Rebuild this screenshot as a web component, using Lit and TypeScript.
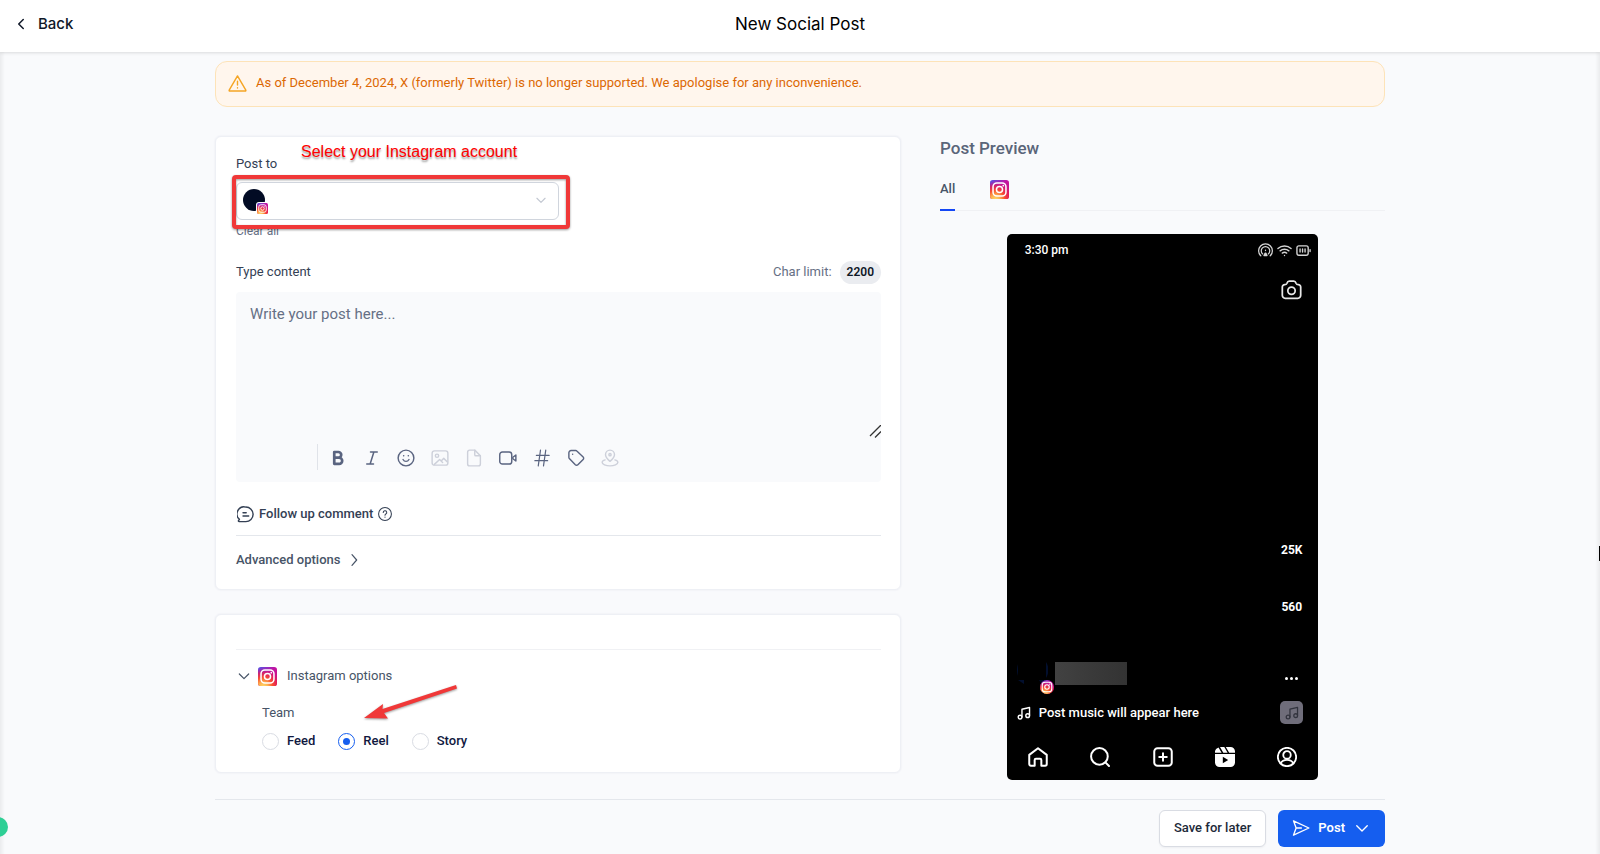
import { LitElement, html, css, svg } from "lit";
import { customElement, state } from "lit/decorators.js";

const stroke = (body: unknown, size = 20, width = 1.6, box = 24) => html`
  <svg
    width=${size}
    height=${size}
    viewBox="0 0 ${box} ${box}"
    fill="none"
    stroke="currentColor"
    stroke-width=${width}
    stroke-linecap="round"
    stroke-linejoin="round"
    aria-hidden="true"
  >
    ${body}
  </svg>
`;

const instagramMark = (size: number) => html`
  <svg width=${size} height=${size} viewBox="0 0 20 20" aria-hidden="true">
    <defs>
      <linearGradient id="ig-base" x1="0.1" y1="0" x2="0.9" y2="0.9">
        <stop offset="0" stop-color="#5b4fe0" />
        <stop offset="0.45" stop-color="#c013a4" />
        <stop offset="1" stop-color="#d6156c" />
      </linearGradient>
      <radialGradient id="ig-glow" cx="0.28" cy="1.05" r="1">
        <stop offset="0" stop-color="#ffdd6b" />
        <stop offset="0.25" stop-color="#fdb04f" />
        <stop offset="0.5" stop-color="#f9502f" />
        <stop offset="0.75" stop-color="#e8204f" stop-opacity="0.7" />
        <stop offset="1" stop-color="#c013a4" stop-opacity="0" />
      </radialGradient>
    </defs>
    <rect width="20" height="20" rx="3" fill="url(#ig-base)" />
    <rect width="20" height="20" rx="3" fill="url(#ig-glow)" />
    <rect x="3.2" y="3.2" width="13.6" height="13.6" rx="4" fill="none" stroke="#fff" stroke-width="1.6" />
    <circle cx="10" cy="10" r="3.2" fill="none" stroke="#fff" stroke-width="1.6" />
    <circle cx="14" cy="6" r="0.9" fill="#fff" />
  </svg>
`;

const icons = {
  back: svg`<path d="M15 6l-6 6 6 6" />`,
  down: svg`<path d="M5 9l7 7 7-7" />`,
  right: svg`<path d="M9 4l7 8-7 8" />`,
  warning: svg`<path d="M12 2.500L22.500 20.500a.6.6 0 0 1-.6.9H2.100a.6.6 0 0 1-.6-.9z" /><path d="M12 9v5M12 17.400v.2" />`,
  bold: svg`<path d="M7 4h5.500a3.800 3.800 0 0 1 0 7.600H7zM7 11.600h6.500a4.100 4.100 0 0 1 0 8.200H7z" />`,
  italic: svg`<path d="M10 4h9M5 20h9M14.500 4l-5 16" />`,
  smile: svg`<circle cx="12" cy="12" r="10.500" /><path d="M8 14s1.500 2.500 4 2.500 4-2.500 4-2.500M8.800 9h.2M15 9h.2" />`,
  image: svg`<rect x="1.500" y="2.500" width="21" height="19" rx="3" /><circle cx="8" cy="9" r="2.200" /><path d="M4.500 20.500L11.500 14l4 4M13.500 16l3.500-3.500 4.500 4.500" />`,
  file: svg`<path d="M13 1.500H6A2.500 2.500 0 0 0 3.500 4v16A2.500 2.500 0 0 0 6 22.500h12a2.500 2.500 0 0 0 2.500-2.500V9z" /><path d="M13 1.500v6A1.500 1.500 0 0 0 14.500 9h6" />`,
  video: svg`<rect x="1" y="4" width="16" height="16" rx="3.500" /><path d="M18.500 11l4-3v8l-4-3z" />`,
  hash: svg`<path d="M4.500 8.500h17M2.500 15.500h17M10 1.500L7 22.500M17 1.500l-3 21" />`,
  tag: svg`<path d="M2.500 5v6.200a2 2 0 0 0 .6 1.400l8 8.400a2.400 2.400 0 0 0 3.400 0l7-7a2.400 2.400 0 0 0 0-3.400l-8.400-8A2 2 0 0 0 11.700 2H5.500a3 3 0 0 0-3 3z" /><path d="M7.500 7h.01" />`,
  place: svg`<path d="M12 16.500c3.500-3.300 6-5.800 6-9a6 6 0 0 0-12 0c0 3.200 2.500 5.700 6 9z" /><circle cx="12" cy="7.500" r="1.500" /><path d="M5.500 14.500C3 15.300 1.500 16.400 1.500 17.700c0 2.500 5 4.800 10.500 4.800s10.500-2.300 10.500-4.800c0-1.300-1.500-2.400-4-3.200" />`,
  comment: svg`<path d="M12.500 1.500a10 10 0 1 1 0 20.500H3c-1 0-1.300-.8-.8-1.500l1.200-1.800A10 10 0 0 1 12.500 1.500z" /><path d="M8.500 9.500h4.500M8.500 14h8" />`,
  help: svg`<circle cx="12" cy="12" r="11" /><path d="M9 9.500a3 3 0 1 1 4.500 2.500c-1 .6-1.500 1.100-1.500 2M12 17.300v.1" />`,
  send: svg`<path d="M5.500 12L2 2.500l20.500 9.500L2 21.500z M5.500 12h7" />`,
  cast: svg`<path d="M4.500 20.500a11 11 0 1 1 15 0M7.500 17.500a6.800 6.800 0 1 1 9 0" /><path fill="currentColor" d="M12 11.500v.5M9.500 20l2-4h1l2 4z" />`,
  wifi: svg`<path d="M1.500 8.800a15.500 15.500 0 0 1 21 0M5 12.600a10.500 10.500 0 0 1 14 0M8.500 16.200a5.500 5.500 0 0 1 7 0M12 19.800v.1" />`,
  battery: svg`<rect x="1.500" y="4.500" width="18" height="15" rx="3" /><path d="M22.500 10.500v3M6.500 9.500v5M10.500 9.500v5M14.500 9.500v5" />`,
  camera: svg`<path d="M1.500 9.200A2.700 2.700 0 0 1 4.200 6.500c1.400 0 2.200-.6 2.600-1.700.4-1.200 1.300-2.300 2.700-2.300h5c1.400 0 2.300 1.100 2.700 2.300.4 1.100 1.200 1.700 2.600 1.700a2.700 2.700 0 0 1 2.700 2.700v9.500a3.300 3.300 0 0 1-3.300 3.300H4.800a3.300 3.300 0 0 1-3.300-3.300z" /><circle cx="12" cy="13.500" r="4.200" />`,
  music: svg`<path d="M8.500 19V5.500l13-3V16" /><circle cx="5.300" cy="19" r="3.200" /><circle cx="18.300" cy="16.500" r="3.200" />`,
  home: svg`<path d="M1.500 9.500L12 1.500l10.500 8v11a2 2 0 0 1-2 2H16v-7a1.500 1.500 0 0 0-1.500-1.500h-5A1.500 1.500 0 0 0 8 15.500v7H3.500a2 2 0 0 1-2-2z" />`,
  search: svg`<circle cx="11.300" cy="11.300" r="10" /><path d="M18.500 18.500l4.300 4.300" />`,
  plus: svg`<rect x="1.500" y="1.500" width="21" height="21" rx="4" /><path d="M12 7.500v9M7.500 12h9" />`,
  profile: svg`<circle cx="12" cy="12" r="11" /><circle cx="12" cy="9.500" r="4.500" /><path d="M4.500 19.500c1.500-3 4-4 7.500-4s6 1 7.500 4" />`,
};

const reelsIcon = html`
  <svg width="20" height="20" viewBox="0 0 20 20" aria-hidden="true">
    <path fill="#fff" d="M0 7h20v8.500a4.500 4.500 0 0 1-4.500 4.500h-11A4.500 4.500 0 0 1 0 15.500z" />
    <path fill="#fff" d="M0 5.800A5 5 0 0 1 3.500.4L6.600 5.800zM5 0h4.300l3.300 5.800H8.300zM10.800 0h4.700A4.500 4.500 0 0 1 20 4.500v1.300h-5.800z" />
    <path fill="#000" d="M7.800 9.800l5.400 3.200-5.400 3.200z" />
  </svg>
`;

const tools = [
  { name: "Bold", icon: icons.bold, width: 3.6, disabled: false },
  { name: "Italic", icon: icons.italic, width: 2, disabled: false },
  { name: "Emoji", icon: icons.smile, width: 1.9, disabled: false },
  { name: "Image", icon: icons.image, width: 1.9, disabled: true },
  { name: "File", icon: icons.file, width: 1.9, disabled: true },
  { name: "Video", icon: icons.video, width: 1.9, disabled: false },
  { name: "Hashtag", icon: icons.hash, width: 1.6, disabled: false },
  { name: "Tag", icon: icons.tag, width: 1.9, disabled: false },
  { name: "Location", icon: icons.place, width: 1.9, disabled: true },
];

@customElement("post-composer")
export class PostComposer extends LitElement {
  static styles = css`
    :host {
      display: block;
    }
    * {
      box-sizing: border-box;
    }
    svg {
      display: block;
      flex: none;
    }
    button,
    textarea {
      font: inherit;
      color: inherit;
      background: none;
      border: 0;
      padding: 0;
    }
    .card {
      border: 1px solid #eef0f5;
      border-radius: 6px;
      background: #fff;
      box-shadow: 0 0 1px 1px #f3f4f8;
      padding: 17px 19px 19px 20px;
      position: relative;
    }
    .label {
      display: block;
      line-height: 20px;
      color: #344054;
    }
    .account {
      display: flex;
      align-items: center;
      justify-content: space-between;
      width: 50%;
      height: 38px;
      margin-top: 8px;
      padding: 0 10px 2px 6px;
      border: 1px solid #d0d5dd;
      border-radius: 6px;
      background: #fff;
      color: #c3c8d2;
    }
    .avatar {
      position: relative;
      width: 22px;
      height: 22px;
      border-radius: 50%;
      background: #020b24;
    }
    .avatar-badge {
      position: absolute;
      left: 13px;
      top: 13px;
      padding: 1px;
      border-radius: 3px;
      background: #fff;
    }
    .clear {
      display: block;
      margin-top: 1px;
      font-size: 12px;
      line-height: 20px;
      color: #667085;
    }
    .content-head {
      display: flex;
      align-items: center;
      justify-content: space-between;
      height: 24px;
      margin: 19px 0 8px;
    }
    .limit {
      display: flex;
      align-items: center;
      gap: 8px;
      color: #667085;
    }
    .pill {
      padding: 0 7px;
      border-radius: 12px;
      background: #eaecf0;
      color: #101828;
      font-size: 12px;
      font-weight: 600;
      line-height: 23px;
    }
    .editor {
      position: relative;
      border-radius: 4px;
      background: #f9fafc;
    }
    .text {
      display: block;
      width: 100%;
      height: 146px;
      padding: 10px 14px;
      outline: 0;
      resize: none;
      font-size: 15px;
      line-height: 24px;
    }
    .text::placeholder {
      color: #667085;
    }
    .grip {
      position: absolute;
      right: 0;
      top: 133px;
      color: #333;
    }
    .tools {
      display: flex;
      align-items: center;
      gap: 16px;
      height: 44px;
      margin-left: 81px;
      padding: 0 0 4px 12px;
      color: #5a6480;
      position: relative;
    }
    .tools::before {
      content: "";
      position: absolute;
      left: 0;
      top: 6px;
      height: 26px;
      border-left: 1px solid #e0e3e9;
    }
    .tool:disabled {
      color: #cdd0da;
    }
    .follow {
      display: flex;
      align-items: center;
      gap: 5px;
      margin-top: 22px;
      padding: 0 0 11px 1px;
      line-height: 20px;
      font-weight: 500;
      color: #344054;
      border-bottom: 1px solid #e4e7ec;
      width: 100%;
    }
    .advanced {
      display: flex;
      align-items: center;
      gap: 6px;
      margin-top: 14px;
      line-height: 20px;
      font-weight: 500;
      color: #475467;
    }
    .options {
      margin-top: 24px;
      padding: 34px 19px 21px 20px;
    }
    .options-head {
      display: flex;
      align-items: center;
      width: 100%;
      padding-top: 16px;
      line-height: 20px;
      color: #475467;
      border-top: 1px solid #f0f1f4;
    }
    .options-head .name {
      margin-left: 10px;
    }
    .options-head .mark {
      margin-left: 6px;
    }
    .group {
      border: 0;
      margin: 0;
      padding: 17px 0 0 26px;
    }
    .group legend {
      display: contents;
    }
    .team {
      display: block;
      line-height: 20px;
      color: #475467;
    }
    .radios {
      display: flex;
      gap: 23px;
      margin-top: 8px;
    }
    .radio {
      display: flex;
      align-items: center;
      gap: 8px;
      line-height: 20px;
      font-weight: 500;
      color: #101840;
    }
    .radio input {
      appearance: none;
      display: grid;
      place-items: center;
      width: 17px;
      height: 17px;
      margin: 0;
      border: 1px solid #d9dce3;
      border-radius: 50%;
      background: #fff;
    }
    .radio input:checked {
      border-color: #155eef;
    }
    .radio input:checked::before {
      content: "";
      width: 7px;
      height: 7px;
      border-radius: 50%;
      background: #155eef;
    }
    .frame {
      position: absolute;
      left: 16px;
      top: 38px;
      width: calc(50% - 4px);
      height: 54px;
      border: 4px solid #f03838;
      border-radius: 4px;
      filter: drop-shadow(0 1px 1px #0006);
      pointer-events: none;
    }
    .note {
      position: absolute;
      left: 85px;
      top: 5px;
      font: 16px/20px "Liberation Sans", Arial, sans-serif;
      color: #f00;
      white-space: nowrap;
      text-shadow: 0 2px 2px #0006;
    }
    .arrow {
      position: absolute;
      left: 148px;
      top: 69px;
      filter: drop-shadow(0 1px 1px #0006);
    }
  `;

  @state() private placement = "Reel";

  render() {
    return html`
      <section class="card">
        <span class="label" id="account-label">Post to</span>
        <button class="account" aria-labelledby="account-label" aria-haspopup="listbox">
          <span class="avatar"><span class="avatar-badge">${instagramMark(11)}</span></span>
          ${stroke(icons.down, 14, 2)}
        </button>
        <button class="clear">Clear all</button>
        <div class="content-head">
          <label class="label" for="content">Type content</label>
          <span class="limit">Char limit: <span class="pill">2200</span></span>
        </div>
        <div class="editor">
          <textarea class="text" id="content" placeholder="Write your post here..."></textarea>
          <svg class="grip" width="12" height="13" viewBox="0 0 12 13" stroke="currentColor" stroke-width="1.3" aria-hidden="true">
            <path d="M1 11L12 0M6 12.500L12 6.500" />
          </svg>
          <div class="tools">
            ${tools.map(
              (t) => html`<button class="tool" aria-label=${t.name} ?disabled=${t.disabled}>
                ${stroke(t.icon, 18, t.width)}
              </button>`,
            )}
          </div>
        </div>
        <button class="follow">
          ${stroke(icons.comment, 17, 2)}<span>Follow up comment</span>${stroke(icons.help, 14, 1.8)}
        </button>
        <button class="advanced"><span>Advanced options</span>${stroke(icons.right, 16, 1.8)}</button>
        <div class="frame"></div>
        <span class="note">Select your Instagram account</span>
      </section>

      <section class="card options">
        <button class="options-head" aria-expanded="true">
          ${stroke(icons.down, 16, 1.8)}<span class="mark">${instagramMark(19)}</span
          ><span class="name">Instagram options</span>
        </button>
        <fieldset class="group">
          <legend><span class="team">Team</span></legend>
          <div class="radios">
            ${["Feed", "Reel", "Story"].map(
              (name) => html`<label class="radio">
                <input
                  type="radio"
                  name="placement"
                  .checked=${this.placement === name}
                  @change=${() => (this.placement = name)}
                />${name}
              </label>`,
            )}
          </div>
        </fieldset>
        <svg class="arrow" width="94" height="36" viewBox="0 0 94 36" fill="#f03838" aria-hidden="true">
          <path d="M0 34L19 20L18.500 25L92 1L93 4.500L20 29L24 34.500z" />
        </svg>
      </section>
    `;
  }
}

@customElement("post-preview")
export class PostPreview extends LitElement {
  static styles = css`
    :host {
      display: block;
    }
    * {
      box-sizing: border-box;
    }
    svg {
      display: block;
      flex: none;
    }
    button {
      font: inherit;
      color: inherit;
      background: none;
      border: 0;
      padding: 0;
    }
    .title {
      margin: 0;
      font-size: 17px;
      font-weight: 500;
      line-height: 24px;
      color: #5a6579;
    }
    .tabs {
      display: flex;
      gap: 35px;
      height: 40px;
      margin-top: 11px;
      border-bottom: 1px solid #f0f1f4;
    }
    .tab {
      display: flex;
      align-items: center;
      height: 40px;
      padding-bottom: 3px;
      color: #475467;
    }
    .active {
      font-weight: 500;
      border-bottom: 2px solid #1447f5;
    }
    .phone {
      display: flex;
      flex-direction: column;
      width: 70%;
      height: 546px;
      margin: 23px auto 0;
      border-radius: 5px;
      background: #000;
      color: #fff;
    }
    .status {
      display: flex;
      align-items: center;
      justify-content: space-between;
      padding: 6px 7px 0 18px;
      font-size: 12px;
      font-weight: 500;
      line-height: 20px;
    }
    .status-icons {
      display: flex;
      gap: 4px;
      color: #d5d5d5;
    }
    .camera {
      align-self: flex-end;
      margin: 19px 16px 0 0;
      color: #e8e8e8;
    }
    .body {
      flex: 1;
      display: flex;
      justify-content: space-between;
      align-items: flex-end;
      padding: 0 15px 0 10px;
    }
    .author {
      display: flex;
      gap: 7px;
    }
    .face {
      position: relative;
      width: 31px;
      height: 23px;
    }
    .face-badge {
      position: absolute;
      left: 23px;
      top: 18px;
      border-radius: 50%;
      overflow: hidden;
    }
    .blurred {
      width: 72px;
      height: 23px;
      background: linear-gradient(90deg, #424242, #3a3a3a 50%, #333);
    }
    .music {
      display: flex;
      align-items: center;
      gap: 8px;
      margin: 18px 0 1px;
      font-weight: 500;
      line-height: 20px;
    }
    .rail {
      display: flex;
      flex-direction: column;
      align-items: center;
      font-size: 12px;
      font-weight: 700;
      line-height: 20px;
      width: 23px;
    }
    .stat {
      margin-bottom: 37px;
    }
    .more {
      margin: 23px 0 21px;
    }
    .cover {
      display: grid;
      place-items: center;
      width: 23px;
      height: 23px;
      border-radius: 5px;
      background: #6f6d7a;
      color: #32343e;
    }
    .nav {
      display: flex;
      justify-content: space-between;
      padding: 23px 21px 13px;
    }
  `;

  render() {
    return html`
      <h2 class="title">Post Preview</h2>
      <div class="tabs" role="tablist">
        <button class="tab active" role="tab" aria-selected="true">All</button>
        <button class="tab" role="tab" aria-label="Instagram">${instagramMark(19)}</button>
      </div>
      <div class="phone">
        <div class="status">
          <span>3:30 pm</span>
          <span class="status-icons">
            ${stroke(icons.cast, 15, 2)}${stroke(icons.wifi, 15, 2.2)}${stroke(icons.battery, 15, 2.2)}
          </span>
        </div>
        <span class="camera">${stroke(icons.camera, 21, 2)}</span>
        <div class="body">
          <div>
            <div class="author">
              <span class="face">
                <svg width="31" height="23" viewBox="0 0 31 23" fill="#020f2e" aria-hidden="true">
                  <path d="M1 2Q-1 8 1 14V2zM29 0Q34 8 29 16zM1 18h6v4zM22 18h7l-5 3z" />
                </svg>
                <span class="face-badge">${instagramMark(14)}</span>
              </span>
              <span class="blurred"></span>
            </div>
            <div class="music">${stroke(icons.music, 14, 2.4)}<span>Post music will appear here</span></div>
          </div>
          <div class="rail">
            <span class="stat">25K</span>
            <span class="stat">560</span>
            <svg class="more" width="13" height="3" viewBox="0 0 13 3" fill="#fff" aria-hidden="true">
              <circle cx="1.500" cy="1.500" r="1.500" /><circle cx="6.500" cy="1.500" r="1.500" /><circle cx="11.500" cy="1.500" r="1.500" />
            </svg>
            <span class="cover">${stroke(icons.music, 14, 2.2)}</span>
          </div>
        </div>
        <div class="nav">
          ${stroke(icons.home, 20, 2.4)}${stroke(icons.search, 20, 2.4)}${stroke(icons.plus, 20, 2.4)}
          ${reelsIcon}${stroke(icons.profile, 20, 2.2)}
        </div>
      </div>
    `;
  }
}

@customElement("app-root")
export class AppRoot extends LitElement {
  static styles = css`
    :host {
      display: flex;
      flex-direction: column;
      min-height: 100vh;
      position: relative;
      overflow: hidden;
      background: #f9fafc;
      font: 13px/20px Roboto, "Liberation Sans", sans-serif;
    }
    * {
      box-sizing: border-box;
    }
    svg {
      display: block;
      flex: none;
    }
    button {
      font: inherit;
      color: inherit;
      background: none;
      border: 0;
      padding: 0;
    }
    .header {
      display: grid;
      grid-template-columns: 1fr auto 1fr;
      align-items: center;
      height: 52px;
      padding: 0 12px 5px;
      background: #fff;
      box-shadow: 0 0 4px #0003;
      color: #101828;
      font: 500 16px/24px Inter, sans-serif;
      z-index: 1;
    }
    .back {
      display: flex;
      align-items: center;
      gap: 8px;
      font-size: 15px;
    }
    .heading {
      margin: 0;
      font-size: 17px;
      font-weight: 400;
      color: #000;
    }
    .main {
      width: 100%;
      max-width: 1202px;
      margin: 0 auto;
      padding: 9px 16px 0;
      flex: 1;
    }
    .alert {
      display: flex;
      align-items: center;
      gap: 9px;
      height: 46px;
      padding: 0 12px 2px;
      border: 1px solid #fde3b8;
      border-radius: 12px;
      background: #fff6ed;
      color: #dc6803;
    }
    .alert-icon {
      color: #f5a524;
    }
    .columns {
      display: grid;
      grid-template-columns: minmax(0, 686fr) minmax(0, 445fr);
      gap: 39px;
      margin-top: 29px;
    }
    .footer {
      display: flex;
      justify-content: flex-end;
      gap: 12px;
      width: calc(100% - 32px);
      max-width: 1170px;
      margin: 0 auto;
      padding: 10px 0 7px;
      border-top: 1px solid #e4e7ec;
    }
    .save,
    .post {
      display: flex;
      align-items: center;
      height: 37px;
      padding: 0 14px 2px;
      border-radius: 6px;
      font-weight: 500;
    }
    .save {
      border: 1px solid #d9dce3;
      background: #fff;
      color: #1d2939;
      box-shadow: 0 1px 2px #1018280d;
    }
    .post {
      gap: 8px;
      background: #155eef;
      color: #fff;
      font-weight: 600;
    }
    .edge {
      position: absolute;
      left: 0;
      top: 52px;
      bottom: 0;
      width: 5px;
      background: linear-gradient(90deg, #0000000f, #0000);
    }
    .edge-right {
      left: auto;
      right: 0;
      background: linear-gradient(270deg, #0000000f, #0000);
    }
    .bubble {
      position: absolute;
      left: -12px;
      bottom: 17px;
      width: 20px;
      height: 20px;
      border-radius: 50%;
      background: #2ecf95;
    }
    .cursor {
      position: absolute;
      right: 0;
      top: 546px;
      width: 1px;
      height: 15px;
      background: #000;
    }
  `;

  render() {
    return html`
      <header class="header">
        <button class="back">${stroke(icons.back, 18, 2)}Back</button>
        <h1 class="heading">New Social Post</h1>
      </header>
      <main class="main">
        <div class="alert" role="alert">
          <span class="alert-icon">${stroke(icons.warning, 19, 1.8)}</span>
          As of December 4, 2024, X (formerly Twitter) is no longer supported. We apologise for any inconvenience.
        </div>
        <div class="columns">
          <post-composer></post-composer>
          <post-preview></post-preview>
        </div>
      </main>
      <footer class="footer">
        <button class="save">Save for later</button>
        <button class="post">${stroke(icons.send, 18, 1.8)}Post${stroke(icons.down, 18, 1.8)}</button>
      </footer>
      <div class="edge"></div>
      <div class="edge edge-right"></div>
      <div class="bubble"></div>
      <div class="cursor"></div>
    `;
  }
}
